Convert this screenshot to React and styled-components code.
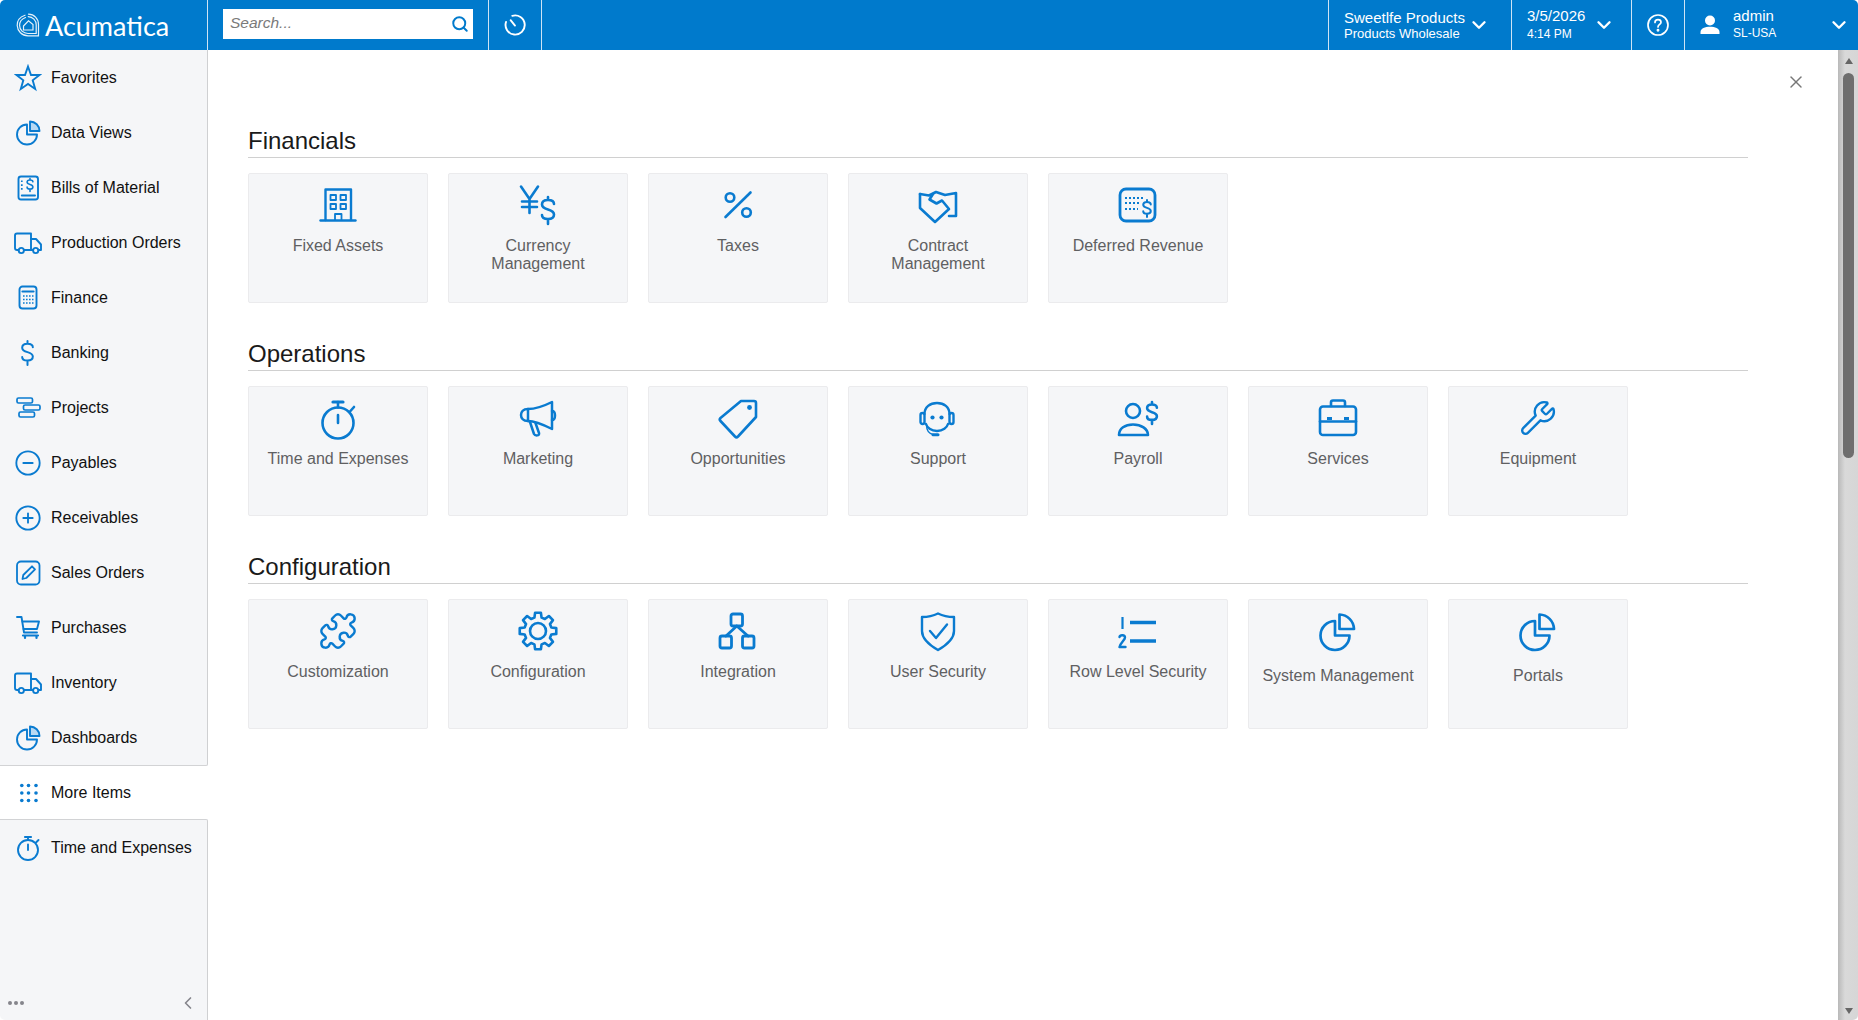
import React from "react";
import styled, { createGlobalStyle } from "styled-components";
import { CircleMinus, CirclePlus, Puzzle, Wrench, Search, X, ChevronDown, ChevronLeft } from "lucide-react";

const BLUE = "#0a7bd0";
const HEADER = "#007acc";

const Global = createGlobalStyle`
  html, body { margin: 0; height: 100%; overflow: hidden; background: #fff; }
  body { font-family: "Liberation Sans", Arial, sans-serif; }
  #root { height: 100%; }
  * { box-sizing: border-box; }
`;

const Page = styled.div`
  height: 1020px;
  display: flex;
  flex-direction: column;
  border-radius: 5px;
  overflow: hidden;
`;

/* ---------- header ---------- */
const Header = styled.header`
  height: 50px;
  flex: none;
  background: ${HEADER};
  color: #fff;
  display: flex;
  align-items: stretch;
`;
const Logo = styled.div`
  width: 208px;
  flex: none;
  padding-left: 16px;
  display: flex;
  align-items: center;
  gap: 5px;
  border-right: 1px solid #cfe4f5;
`;
const LogoText = styled.span`
  font-family: "Lato", "Liberation Sans", sans-serif;
  font-size: 27px;
  line-height: 1;
`;
const SearchCell = styled.div`
  width: 281px;
  flex: none;
  padding: 9px 15px 11px;
  border-right: 1px solid #cfe4f5;
`;
const SearchBox = styled.div`
  height: 30px;
  width: 250px;
  background: #fff;
  display: flex;
  align-items: center;
  padding: 0 4px 0 7px;
  color: ${HEADER};
`;
const SearchInput = styled.input`
  flex: 1;
  min-width: 0;
  border: 0;
  outline: 0;
  padding: 0 0 2px;
  background: transparent;
  font: italic 15.5px "Liberation Sans", Arial, sans-serif;
  &::placeholder { color: #7a7a7a; opacity: 1; }
`;
const IconCell = styled.div`
  width: ${(p) => p.$w}px;
  flex: none;
  display: flex;
  align-items: center;
  justify-content: center;
  ${(p) => p.$left && "border-left: 1px solid #cfe4f5;"}
  ${(p) => p.$right && "border-right: 1px solid #cfe4f5;"}
`;
const Spacer = styled.div`
  flex: 1;
`;
const Menu = styled.div`
  width: ${(p) => p.$w}px;
  flex: none;
  border-left: 1px solid #cfe4f5;
  padding-left: ${(p) => p.$pad}px;
  padding-right: ${(p) => p.$padRight || 9}px;
  display: flex;
  align-items: center;
  gap: ${(p) => p.$gap || 0}px;
`;
const MenuText = styled.div`
  flex: 1;
  display: flex;
  flex-direction: column;
  gap: ${(p) => p.$gap}px;
  padding-bottom: ${(p) => p.$lift || 0}px;
  white-space: nowrap;
`;
const MenuTop = styled.span`
  font-size: 15px;
  line-height: 17px;
`;
const MenuBottom = styled.span`
  font-size: ${(p) => p.$size}px;
  line-height: 15px;
`;

/* ---------- body ---------- */
const Body = styled.div`
  flex: 1;
  min-height: 0;
  display: flex;
`;
const Sidebar = styled.nav`
  width: 208px;
  flex: none;
  display: flex;
  flex-direction: column;
  background: #f5f6f8;
`;
const NavGroup = styled.div`
  border-right: 1px solid #cfd0d2;
  flex: ${(p) => (p.$grow ? 1 : "none")};
  display: flex;
  flex-direction: column;
  ${(p) => p.$bottom && "border-bottom: 1px solid #d2d3d5; border-bottom-right-radius: 2px;"}
  ${(p) => p.$top && "border-top: 1px solid #d2d3d5; border-top-right-radius: 2px;"}
`;
const NavItem = styled.a`
  height: ${(p) => (p.$active ? 53 : 55)}px;
  flex: none;
  display: flex;
  align-items: center;
  gap: 9px;
  padding-left: 14px;
  font-size: 16px;
  color: #111;
  ${(p) => p.$active && "background: #fff;"}
`;
const NavIconSlot = styled.span`
  width: 28px;
  height: 28px;
  flex: none;
  display: flex;
  align-items: center;
  justify-content: center;
  color: ${BLUE};
`;
const SideFooter = styled.div`
  margin-top: auto;
  height: 35px;
  padding: 0 9px 0 8px;
  display: flex;
  align-items: center;
  justify-content: space-between;
  color: #85858c;
`;
const Dots = styled.span`
  display: flex;
  gap: 2px;
  & > i {
    width: 4px;
    height: 4px;
    border-radius: 50%;
    background: #85858c;
  }
`;

const Main = styled.main`
  flex: 1;
  min-width: 0;
  position: relative;
  padding: 76px 90px 0 40px;
  background: #fff;
`;
const CloseBtn = styled.button`
  position: absolute;
  top: 22px;
  right: 32px;
  width: 20px;
  height: 20px;
  padding: 0;
  border: 0;
  background: transparent;
  color: #777;
  display: flex;
  align-items: center;
  justify-content: center;
`;
const Section = styled.section`
  margin-bottom: 36px;
`;
const SectionTitle = styled.h2`
  margin: 0 0 15px;
  height: 32px;
  font-size: 24px;
  font-weight: 400;
  line-height: 30px;
  color: #1a1a1a;
  border-bottom: 1.5px solid #d0d0d0;
`;
const CardRow = styled.div`
  display: flex;
  gap: 20px;
`;
const Card = styled.a`
  width: 180px;
  height: 130px;
  flex: none;
  background: #f5f6f8;
  border: 1px solid #ebebed;
  border-radius: 2px;
  padding: 8px 8px 0;
  display: flex;
  flex-direction: column;
  align-items: center;
  text-align: center;
`;
const CardIcon = styled.span`
  width: 40px;
  height: 46px;
  flex: none;
  display: flex;
  align-items: center;
  justify-content: center;
  color: ${BLUE};
`;
const CardLabel = styled.span`
  margin-top: ${(p) => (p.$low ? 13 : 9)}px;
  max-width: ${(p) => (p.$low ? "none" : "145px")};
  font-size: 16px;
  line-height: 18px;
  color: #5f6062;
`;

const Scrollbar = styled.div`
  width: 20px;
  flex: none;
  display: flex;
  flex-direction: column;
  align-items: center;
  background: linear-gradient(90deg, #b9b9b9, #d9d9d9 35%, #d6d6d6);
  padding: 8px 0 6px 1px;
`;
const ArrowUp = styled.i`
  width: 0;
  height: 0;
  border-left: 4.5px solid transparent;
  border-right: 4.5px solid transparent;
  border-bottom: 6px solid #666;
`;
const ArrowDown = styled.i`
  margin-top: auto;
  width: 0;
  height: 0;
  border-left: 4.5px solid transparent;
  border-right: 4.5px solid transparent;
  border-top: 6px solid #666;
`;
const Thumb = styled.div`
  margin-top: 9px;
  width: 11px;
  height: 385px;
  border-radius: 6px;
  background: #6e6e6e;
`;

/* ---------- drawn icons ---------- */
const Svg = ({ s = 40, w = 2.4, children }) => (
  <svg width={s} height={s} viewBox={`0 0 ${s} ${s}`} fill="none" stroke="currentColor" strokeWidth={w} strokeLinecap="round" strokeLinejoin="round" style={{ overflow: "visible" }}>
    {children}
  </svg>
);

const dollar = (x, top, h) => {
  const u = h / 27;
  const f = (n) => (n * u).toFixed(2);
  return (
    `M${x + 6 * u} ${top + 7 * u}` +
    `c0 ${f(-2.5)} ${f(-2.5)} ${f(-4)} ${f(-6)} ${f(-4)}` +
    `s${f(-6)} ${f(1.5)} ${f(-6)} ${f(4.5)}` +
    `c0 ${f(3)} ${f(2.5)} ${f(4)} ${f(6)} ${f(5)}` +
    `s${f(6)} ${f(2)} ${f(6)} ${f(5)}` +
    `s${f(-2.5)} ${f(4.5)} ${f(-6)} ${f(4.5)}` +
    `s${f(-6)} ${f(-1.5)} ${f(-6)} ${f(-4)}` +
    `M${x} ${top}v${f(3)}M${x} ${top + 22 * u}v${f(5)}`
  );
};

const gearPath = (cx, cy, ro, ri) => {
  const pt = (r, deg) => {
    const a = (deg * Math.PI) / 180;
    return `${(cx + r * Math.cos(a)).toFixed(2)} ${(cy + r * Math.sin(a)).toFixed(2)}`;
  };
  let d = "";
  for (let i = 0; i < 8; i++) {
    const a = -90 + i * 45;
    d += `${i ? "L" : "M"}${pt(ri, a - 15)}L${pt(ro, a - 9)}L${pt(ro, a + 9)}L${pt(ri, a + 15)}`;
  }
  return d + "Z";
};

const Building = () => (
  <Svg>
    <path d="M7.5 35V4.5H33V35" />
    <path d="M2.5 35.5H37.5" />
    <rect x="12.5" y="10" width="5.5" height="5" strokeWidth="1.8" />
    <rect x="22.5" y="10" width="5.5" height="5" strokeWidth="1.8" />
    <rect x="12.5" y="19" width="5.5" height="5" strokeWidth="1.8" />
    <rect x="22.5" y="19" width="5.5" height="5" strokeWidth="1.8" />
    <path d="M17 35V29H23.5V35" strokeWidth="1.8" />
  </Svg>
);
const Currency = () => (
  <Svg w={2.6}>
    <path d="M3 1.5L11.5 14L20 1.5M11.5 14V28M4 16.5H19M4 22H19" />
    <path d={dollar(30, 12, 27)} />
  </Svg>
);
const PercentIcon = () => (
  <Svg w={2.6}>
    <path d="M32.5 7.5L7.5 32" />
    <circle cx="12" cy="12.5" r="4.3" />
    <circle cx="28.5" cy="27.5" r="4.3" />
  </Svg>
);
const Handshake = () => (
  <Svg w={2.6}>
    <path d="M2 9L11 10.5L18 7L27 10L38 8V31H31" />
    <path d="M2 9V23L17 37L31 24L24 15.5L18.5 18.5L11.5 14.5L15 9" />
  </Svg>
);
const Deferred = () => (
  <Svg w={2.8}>
    <rect x="2" y="4" width="35" height="32" rx="6" />
    <path d="M7 13H25M7 18H22M7 24H20" strokeWidth="2" strokeDasharray="2 2" strokeLinecap="butt" />
    <path d={dollar(29, 15, 17)} strokeWidth="2" />
  </Svg>
);
const Stopwatch = () => (
  <Svg w={2.6}>
    <circle cx="20" cy="25" r="15.5" />
    <path d="M15 4H25" strokeWidth="3.2" />
    <path d="M20 4V9.5M20 17V25M32 13.5L36 9" />
  </Svg>
);
const Megaphone = () => (
  <Svg w={2.5}>
    <path d="M10 11C18 11 26 8 34 4V31C26 27 18 23 10 23C5 23 3 20 3 17C3 14 5 11 10 11Z" />
    <path d="M10 11V23M12 24L16 36C17 38 22 38 21 35L17.5 25" />
    <path d="M34 13C38 13 38 22 34 22" />
  </Svg>
);
const Tag = () => (
  <Svg w={2.6}>
    <path d="M23 3H36Q38 3 38 5V19L20 38.5Q18.5 40 17 38.5L2.5 23Q1 21.5 2.5 20Z" />
    <circle cx="31.5" cy="9.5" r="2.4" fill="currentColor" stroke="none" />
  </Svg>
);
const Headset = () => (
  <Svg w={2.4}>
    <path d="M6.5 16C6.5 9 12 5 19 5S31.5 9 31.5 16M8 26C9 29.5 13 33 19 33C25 33 29 29.5 30 26" />
    <rect x="2.5" y="15" width="4" height="11" rx="2" />
    <rect x="31.5" y="15" width="4" height="11" rx="2" />
    <circle cx="14.5" cy="19.5" r="2.1" fill="currentColor" stroke="none" />
    <circle cx="23.5" cy="19.5" r="2.1" fill="currentColor" stroke="none" />
    <path d="M8.5 27C8.5 32 11 35.5 15 36.5" strokeWidth="1.3" />
    <path d="M15 36.8H20" strokeWidth="3" />
  </Svg>
);
const Payroll = () => (
  <Svg w={2.6}>
    <ellipse cx="15" cy="13" rx="7" ry="7" />
    <path d="M1 37C1 30.5 7 26.5 15 26.5S30 30.5 30 37Z" />
    <path d={dollar(34, 4, 22)} />
  </Svg>
);
const Briefcase = () => (
  <Svg w={2.6}>
    <rect x="2" y="8.5" width="36" height="28.5" rx="3" />
    <path d="M13 8V4.5Q13 2.5 15 2.5H25Q27 2.5 27 4.5V8" />
    <path d="M2 23.5H38" />
    <path d="M9 20.5H14M26 20.5H31" strokeWidth="3" strokeLinecap="butt" />
  </Svg>
);
const Gear = () => (
  <Svg w={2.6}>
    <path d={gearPath(20, 20, 18.5, 13.8)} />
    <circle cx="20" cy="20" r="8" />
  </Svg>
);
const Network = () => (
  <Svg w={2.8}>
    <rect x="13" y="3" width="11.5" height="12" rx="2" />
    <rect x="2" y="25" width="11.5" height="12" rx="2" />
    <rect x="24.5" y="25" width="11.5" height="12" rx="2" />
    <path d="M18.8 15L8 25M18.8 15L30 25" />
  </Svg>
);
const Shield = () => (
  <Svg w={2.4}>
    <path d="M20 2.5C24 4.5 30 6 36 6V20C36 28 27 35 20 39C13 35 4 28 4 20V6C10 6 16 4.5 20 2.5Z" />
    <path d="M12 20L18 27L29 13.5" />
  </Svg>
);
const RowLevel = () => (
  <Svg w={3.4}>
    <path d="M4.5 6V18" strokeWidth="2.2" strokeLinecap="butt" />
    <path d="M12 11.5H38M12 30H38" strokeLinecap="butt" />
    <path d="M1.5 26C2 23.5 7 23.5 7 26.5C7 29 3 31 1.5 36H7.5" strokeWidth="2.4" />
  </Svg>
);
const Pie = () => (
  <Svg w={2.7}>
    <path d="M17 10A14.5 14.5 0 1 0 31.5 24.5H17Z" />
    <path d="M21.5 3.5A15 15 0 0 1 36 18H21.5Z" />
  </Svg>
);

/* sidebar icons, 28 box */
const SStar = () => (
  <svg width="28" height="28" viewBox="0 0 28 28" fill="none" stroke="currentColor" strokeWidth="1.9" strokeLinejoin="miter">
    <path d="M14 2.5L17 11H25.5L18.7 16.3L21.2 25L14 20L6.8 25L9.3 16.3L2.5 11H11Z" />
  </svg>
);
const SPie = () => (
  <Svg s={28} w={1.9}>
    <path d="M13 5.5A10 10 0 1 0 23 15.5H13Z" />
    <path d="M16 2.5A9.5 9.5 0 0 1 25.5 12H16Z" fill="#b8d9f3" />
  </Svg>
);
const SBill = () => (
  <Svg s={28} w={1.9}>
    <rect x="4.5" y="2.5" width="19.5" height="23" rx="2.5" />
    <path d="M7.8 6.5V17" strokeDasharray="1.6 2.2" strokeLinecap="butt" strokeWidth="1.7" />
    <path d={dollar(16, 4.5, 13)} strokeWidth="1.6" />
    <path d="M7.8 21.5H21" />
  </Svg>
);
const STruck = () => (
  <Svg s={28} w={1.9}>
    <path d="M4.5 21H3Q1 21 1 19V6.5Q1 4.5 3 4.5H17V21H10" />
    <path d="M17 10H22L27 15.5V21H24.5M19 21H17" />
    <circle cx="7.3" cy="21.5" r="2.6" />
    <circle cx="21.7" cy="21.5" r="2.6" />
  </Svg>
);
const SCalc = () => (
  <Svg s={28} w={1.9}>
    <rect x="5.5" y="2.5" width="17" height="22" rx="3" />
    <path d="M8.5 7.5H19.5" strokeWidth="2.2" />
    <path d="M9 12H19.5M9 15.5H19.5M9 19H19.5" strokeDasharray="1.6 1.4" strokeLinecap="butt" strokeWidth="1.7" />
  </Svg>
);
const SDollar = () => (
  <Svg s={28} w={2}>
    <path d={dollar(13.5, 2, 24)} />
  </Svg>
);
const SProjects = () => (
  <Svg s={28} w={1.7}>
    <rect x="3" y="4" width="15.5" height="5" rx="1.5" />
    <rect x="9.5" y="11" width="16.5" height="5" rx="1.5" />
    <rect x="5" y="18" width="15.5" height="5" rx="1.5" />
  </Svg>
);
const SEdit = () => (
  <Svg s={28} w={1.8}>
    <rect x="3" y="2.5" width="22.5" height="23" rx="4" />
    <path d="M8.5 20L9.3 16L18 7.3L21 10.3L12.3 19Z" />
  </Svg>
);
const SCart = () => (
  <Svg s={28} w={1.9}>
    <path d="M3 3H7.5L10 18.5H23" />
    <path d="M8.5 7.5H25L23 15H9.5" />
    <path d="M9 21.5H24M11 21.5V24M22.5 21.5V24" strokeWidth="2.2" />
  </Svg>
);
const SGrid = () => (
  <svg width="28" height="28" viewBox="0 0 28 28" fill="currentColor">
    {[6.5, 14, 21.5].map((y) =>
      [7.8, 14.5, 22].map((x) => <circle key={`${x}-${y}`} cx={x} cy={y} r="1.8" />)
    )}
  </svg>
);
const SWatch = () => (
  <Svg s={28} w={1.9}>
    <circle cx="14" cy="16" r="10" />
    <path d="M11 3H17" strokeWidth="2.2" />
    <path d="M14 3V6M14 10.5V16M22 8.5L24.5 6" />
  </Svg>
);

const LogoMark = () => (
  <svg width="24" height="24" viewBox="0 0 24 24" fill="none" stroke="#fff" strokeWidth="1.2" strokeLinecap="round" style={{ opacity: 0.9 }}>
    <path d="M9 2.2C3.8 4 1 8 1.2 12.5C1.4 18 6 22.8 12 22.8H22.5V11.5C22.5 5.5 18 1.2 12.5 1.2" />
    <path d="M9.5 4.5C6 5.8 3.6 8.8 3.6 12.4C3.6 17 7.4 20.5 12 20.5H20.2V11.8C20.2 7.4 16.8 3.8 12.2 3.6" />
    <path d="M7.5 13L12.5 7.8L17 11.5V17H7.5Z" />
  </svg>
);
const HistoryMark = () => (
  <svg width="24" height="24" viewBox="0 0 24 24" fill="none" stroke="#fff" strokeWidth="1.9" strokeLinecap="round">
    <path d="M9.3 2.8A9.6 9.6 0 1 1 3 9" />
    <path d="M7.6 7.2L12 12.6" />
  </svg>
);
const HelpMark = () => (
  <svg width="24" height="24" viewBox="0 0 24 24" fill="none" stroke="#fff" strokeWidth="1.7" strokeLinecap="round">
    <circle cx="12" cy="12" r="10" />
    <path d="M9 9.4C9 7.6 10.4 6.6 12 6.6C13.8 6.6 15 7.7 15 9.2C15 11.4 12 11.4 12 14" />
    <circle cx="12" cy="17.2" r="0.6" fill="#fff" />
  </svg>
);
const UserMark = () => (
  <svg width="22" height="22" viewBox="0 0 22 22" fill="#fff">
    <circle cx="11" cy="6.5" r="5" />
    <path d="M1.5 20V18C1.5 14.5 6 12.8 11 12.8S20.5 14.5 20.5 18V20Z" />
  </svg>
);

/* ---------- data ---------- */
const NAV = [
  ["Favorites", <SStar />],
  ["Data Views", <SPie />],
  ["Bills of Material", <SBill />],
  ["Production Orders", <STruck />],
  ["Finance", <SCalc />],
  ["Banking", <SDollar />],
  ["Projects", <SProjects />],
  ["Payables", <CircleMinus size={28} strokeWidth={1.6} />],
  ["Receivables", <CirclePlus size={28} strokeWidth={1.6} />],
  ["Sales Orders", <SEdit />],
  ["Purchases", <SCart />],
  ["Inventory", <STruck />],
  ["Dashboards", <SPie />],
];

const SECTIONS = [
  {
    title: "Financials",
    cards: [
      ["Fixed Assets", <Building />],
      ["Currency Management", <Currency />],
      ["Taxes", <PercentIcon />],
      ["Contract Management", <Handshake />],
      ["Deferred Revenue", <Deferred />],
    ],
  },
  {
    title: "Operations",
    cards: [
      ["Time and Expenses", <Stopwatch />],
      ["Marketing", <Megaphone />],
      ["Opportunities", <Tag />],
      ["Support", <Headset />],
      ["Payroll", <Payroll />],
      ["Services", <Briefcase />],
      ["Equipment", <Wrench size={38} strokeWidth={1.5} />],
    ],
  },
  {
    title: "Configuration",
    cards: [
      ["Customization", <Puzzle size={40} strokeWidth={1.45} />],
      ["Configuration", <Gear />],
      ["Integration", <Network />],
      ["User Security", <Shield />],
      ["Row Level Security", <RowLevel />],
      ["System Management", <Pie />, true],
      ["Portals", <Pie />, true],
    ],
  },
];

export default function App() {
  return (
    <Page>
      <Global />
      <Header>
        <Logo>
          <LogoMark />
          <LogoText>Acumatica</LogoText>
        </Logo>
        <SearchCell>
          <SearchBox>
            <SearchInput placeholder="Search..." readOnly />
            <Search size={18} strokeWidth={2.6} />
          </SearchBox>
        </SearchCell>
        <IconCell $w={53} $right>
          <HistoryMark />
        </IconCell>
        <Spacer />
        <Menu $w={183} $pad={15} $padRight={21}>
          <MenuText $gap={0}>
            <MenuTop>Sweetlfe Products</MenuTop>
            <MenuBottom $size={13}>Products Wholesale</MenuBottom>
          </MenuText>
          <ChevronDown size={22} strokeWidth={2.6} />
        </Menu>
        <Menu $w={120} $pad={15} $padRight={16}>
          <MenuText $gap={3} $lift={2}>
            <MenuTop>3/5/2026</MenuTop>
            <MenuBottom $size={12}>4:14 PM</MenuBottom>
          </MenuText>
          <ChevronDown size={22} strokeWidth={2.6} />
        </Menu>
        <IconCell $w={53} $left>
          <HelpMark />
        </IconCell>
        <Menu $w={174} $pad={14} $padRight={8} $gap={12}>
          <UserMark />
          <MenuText $gap={2} $lift={3}>
            <MenuTop>admin</MenuTop>
            <MenuBottom $size={12}>SL-USA</MenuBottom>
          </MenuText>
          <ChevronDown size={22} strokeWidth={2.6} />
        </Menu>
      </Header>
      <Body>
        <Sidebar>
          <NavGroup $bottom>
            {NAV.map(([label, icon]) => (
              <NavItem key={label}>
                <NavIconSlot>{icon}</NavIconSlot>
                {label}
              </NavItem>
            ))}
          </NavGroup>
          <NavItem $active>
            <NavIconSlot>
              <SGrid />
            </NavIconSlot>
            More Items
          </NavItem>
          <NavGroup $grow $top>
            <NavItem>
              <NavIconSlot>
                <SWatch />
              </NavIconSlot>
              Time and Expenses
            </NavItem>
            <SideFooter>
              <Dots>
                <i />
                <i />
                <i />
              </Dots>
              <ChevronLeft size={20} strokeWidth={2} />
            </SideFooter>
          </NavGroup>
        </Sidebar>
        <Main>
          <CloseBtn aria-label="Close">
            <X size={20} strokeWidth={1.7} />
          </CloseBtn>
          {SECTIONS.map((sec) => (
            <Section key={sec.title}>
              <SectionTitle>{sec.title}</SectionTitle>
              <CardRow>
                {sec.cards.map(([label, icon, low]) => (
                  <Card key={label}>
                    <CardIcon>{icon}</CardIcon>
                    <CardLabel $low={low}>{label}</CardLabel>
                  </Card>
                ))}
              </CardRow>
            </Section>
          ))}
        </Main>
        <Scrollbar>
          <ArrowUp />
          <Thumb />
          <ArrowDown />
        </Scrollbar>
      </Body>
    </Page>
  );
}
